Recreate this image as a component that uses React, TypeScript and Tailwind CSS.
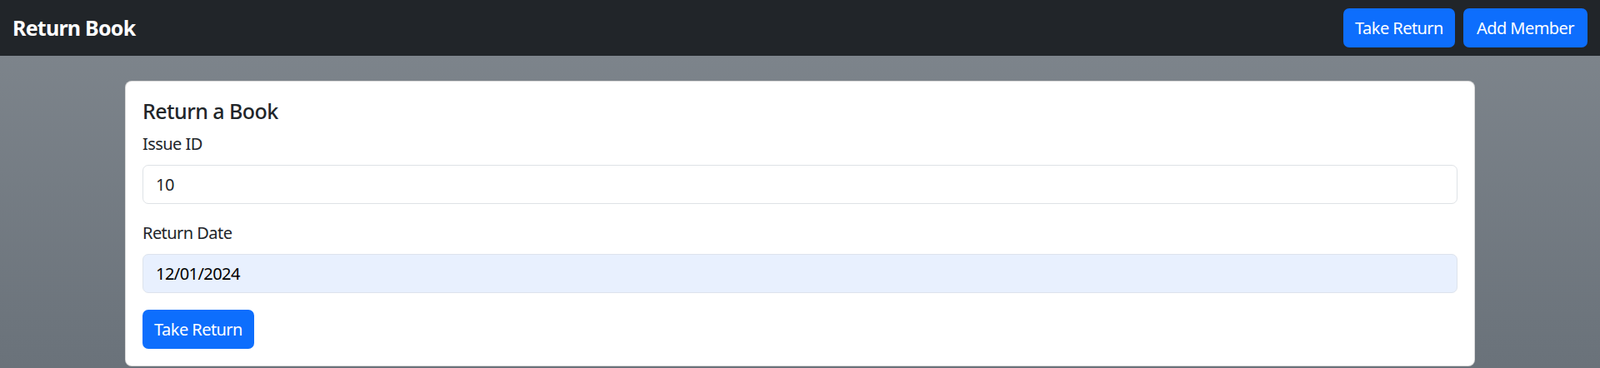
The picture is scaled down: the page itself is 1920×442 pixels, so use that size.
export default function App() {
  return (
    <div
      className="min-h-screen text-[#212529] tracking-[-0.55px] bg-gradient-to-b from-[#80878e] to-[#6a727a]"
      style={{ fontFamily: '"Segoe UI", "Noto Sans", "Open Sans", sans-serif' }}
    >
      {/* Navbar */}
      <nav className="h-[67px] bg-[#212529] flex items-center justify-between px-[15px]">
        <span className="text-white font-bold text-[25px] leading-none tracking-[-0.75px]">Return Book</span>
        <div className="flex gap-[10px]">
          <button className="w-[134px] h-[47px] rounded-[7px] bg-[#0d6efd] text-white text-[20px]">
            Take Return
          </button>
          <button className="w-[149px] h-[47px] rounded-[7px] bg-[#0d6efd] text-white text-[20px]">
            Add Member
          </button>
        </div>
      </nav>

      {/* Card */}
      <div className="pt-[30px] flex justify-center">
        <div className="w-[1620px] bg-white border border-black/15 rounded-[8px] p-[20px]">
          <h5 className="text-[25px] leading-[30px] font-medium mb-[10px]">Return a Book</h5>
          <div className="mb-[20px]">
            <label className="block text-[20px] leading-[30px] mb-[10px]">Issue ID</label>
            <input
              type="text"
              defaultValue="10"
              className="w-full h-[47px] px-[15px] text-[20px] border border-[#dee2e6] rounded-[7px] outline-none"
            />
          </div>
          <div className="mb-[20px]">
            <label className="block text-[20px] leading-[30px] mb-[10px]">Return Date</label>
            <input
              type="text"
              defaultValue="12/01/2024"
              className="w-full h-[47px] px-[15px] text-[20px] bg-[#e8f0fe] border border-[#dde3ec] rounded-[7px] outline-none text-black"
            />
          </div>
          <button className="w-[134px] h-[47px] rounded-[7px] bg-[#0d6efd] text-white text-[20px]">
            Take Return
          </button>
        </div>
      </div>
    </div>
  )
}
